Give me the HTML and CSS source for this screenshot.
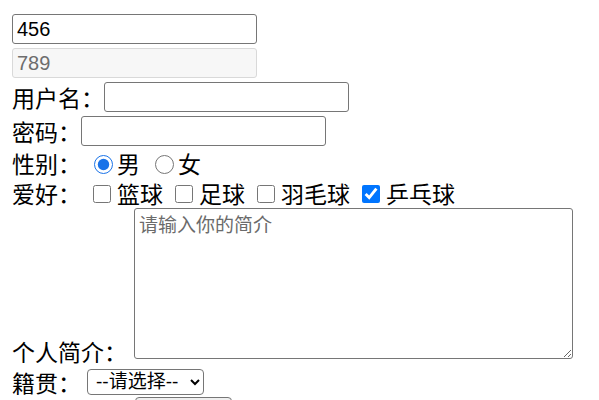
FILE: index.html
```html
<!DOCTYPE html>
<html lang="zh">
<head>
<meta charset="utf-8">
<title>表单</title>
<link rel="stylesheet" href="styles.css">
</head>
<body>
<form class="form">
  <div class="row"><input class="text" type="text" value="456"></div>
  <div class="row"><input class="text" type="text" value="789" disabled></div>
  <div class="row"><span class="label">用户名：</span><input class="text" type="text"></div>
  <div class="row"><span class="label">密码：</span><input class="text" type="password"></div>
  <div class="row short">
    <span class="label">性别：</span>
    <label class="opt"><input class="radio" type="radio" name="sex" checked>男</label>
    <label class="opt"><input class="radio" type="radio" name="sex">女</label>
  </div>
  <div class="row short">
    <span class="label">爱好：</span>
    <label class="opt"><input class="check" type="checkbox">篮球</label>
    <label class="opt"><input class="check" type="checkbox">足球</label>
    <label class="opt"><input class="check" type="checkbox">羽毛球</label>
    <label class="opt"><input class="check" type="checkbox" checked>乒乓球</label>
  </div>
  <div class="row area-row">
    <span class="label">个人简介：</span>
    <textarea class="intro" placeholder="请输入你的简介"></textarea>
  </div>
  <div class="row select-row">
    <span class="label">籍贯：</span>
    <select class="place">
      <option>--请选择--</option>
      <option>北京</option>
      <option>上海</option>
    </select>
  </div>
  <div class="row file-row">
    <span class="label">上传头像：</span>
    <button class="file-btn" type="button">选择文件</button>
  </div>
</form>
</body>
</html>
```

FILE: styles.css
```css
html, body {
  background: #ffffff;
}

body {
  margin: 12px;
  font-family: "Noto Sans CJK SC", "Noto Sans", sans-serif;
  font-size: 23px;
  color: #000000;
}

.form {
  display: flex;
  flex-direction: column;
}

.row {
  display: flex;
  align-items: center;
  height: 34px;
  white-space: nowrap;
}

.row.short {
  height: 30px;
}

.label {
  line-height: 30px;
}

.text {
  box-sizing: border-box;
  width: 245px;
  height: 30px;
  margin: 0;
  padding: 1px 4px;
  border: 1.5px solid #767676;
  border-radius: 3px;
  background: #ffffff;
  font-family: "Liberation Sans", Arial, sans-serif;
  font-size: 20px;
  color: #000000;
}

.text:disabled {
  border-color: #d9d9d9;
  background: #f7f7f7;
  color: #6d6d6d;
}

.opt {
  display: flex;
  align-items: center;
  line-height: 30px;
}

.radio {
  width: 19px;
  height: 19px;
  margin: 2px 4px 0 13px;
  accent-color: #1a73e8;
}

.opt + .opt .radio {
  margin-left: 15px;
}

.check {
  width: 18px;
  height: 18px;
  margin: 1px 6px 0 12px;
}

.opt + .opt .check {
  margin-left: 12px;
}

.area-row {
  height: 158px;
  align-items: flex-end;
}

.intro {
  box-sizing: border-box;
  width: 439px;
  height: 151px;
  margin: 0 0 7px 7px;
  padding: 3px 4px;
  border: 1.5px solid #767676;
  border-radius: 3px;
  font-family: "Noto Sans CJK SC", sans-serif;
  font-size: 19px;
  line-height: 24px;
  resize: both;
}

.intro::placeholder {
  color: #6b6b6b;
}

.select-row {
  height: 31px;
}

.place {
  box-sizing: border-box;
  width: 117px;
  height: 26px;
  margin: 0 0 0 6px;
  padding: 0 2px 0 4px;
  border: 1.5px solid #767676;
  border-radius: 4px;
  background: #ffffff;
  font-family: "Liberation Sans", "Noto Sans CJK SC", sans-serif;
  font-size: 19px;
  color: #000000;
}

.file-row {
  align-items: flex-start;
}

.file-btn {
  box-sizing: border-box;
  width: 97px;
  height: 30px;
  margin: 0 0 0 8px;
  border: 1.5px solid #767676;
  border-radius: 4px;
  background: #efefef;
  font-family: "Noto Sans CJK SC", sans-serif;
  font-size: 19px;
}
```
